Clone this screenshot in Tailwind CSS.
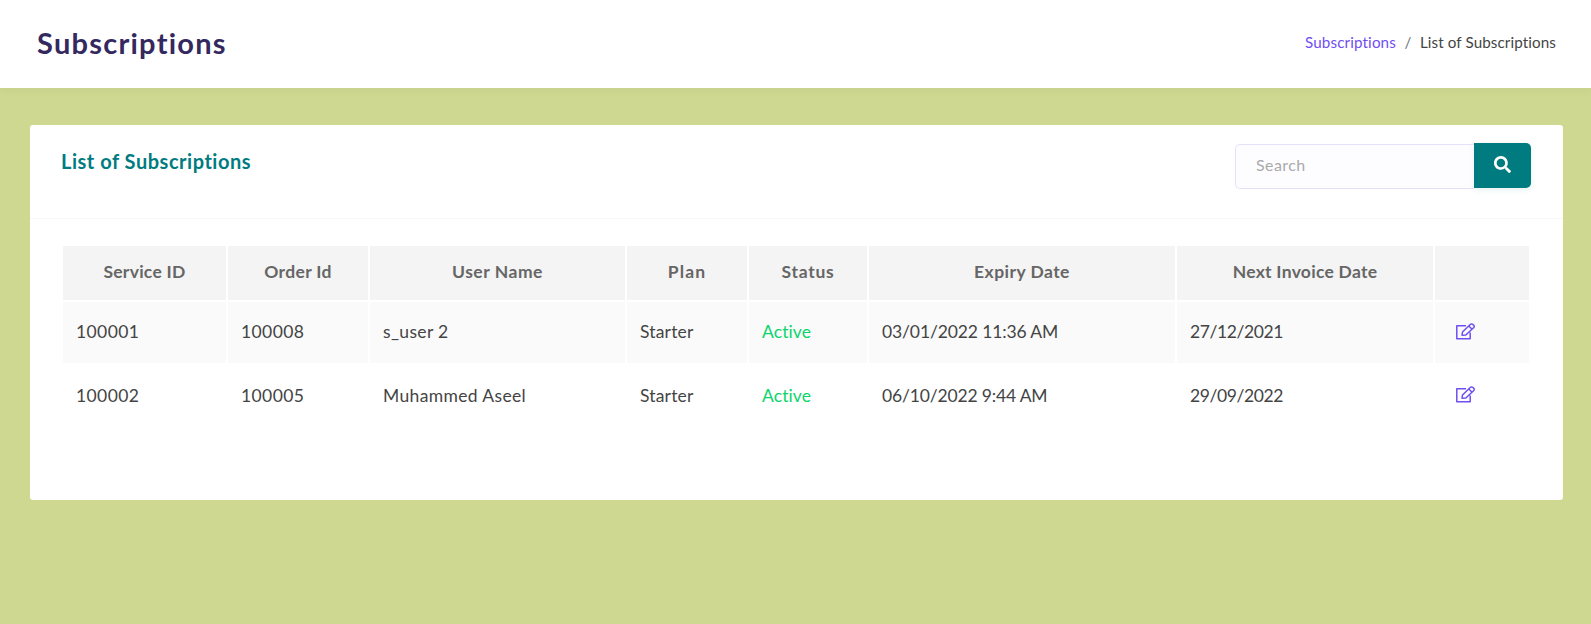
<!DOCTYPE html>
<html lang="en">
<head>
<meta charset="utf-8">
<title>Subscriptions</title>
<script src="https://cdn.jsdelivr.net/npm/@tailwindcss/browser@4"></script>
</head>
<body class="min-h-screen bg-[#ced890] font-['Lato',sans-serif] text-[#444]">
<svg class="hidden">
  <symbol id="edit" viewBox="0 0 19 17"><path d="M10 2.700H.8V15.700H14.200V9.500M6 12.300l.5-3.300 7.700-7.500a1.900 1.900 0 0 1 2.800 0l.6.600a1.900 1.900 0 0 1 0 2.600L9.800 12l-3.800.3zM12.800 3l3.300 3.300" fill="none" stroke="#6f4ef2" stroke-width="1.500" stroke-linejoin="round"/></symbol>
</svg>

<header class="flex h-22 items-center justify-between bg-white pl-[37px] pr-[35px] shadow-[0_4px_8px_rgba(0,0,0,0.03)]">
  <h1 class="-mt-0.5 text-[29px] leading-9 font-bold tracking-[1.25px] text-[#34295f]">Subscriptions</h1>
  <nav class="-mt-1 flex text-[15.2px] leading-6">
    <a class="tracking-[0.13px] text-[#6f4ef2]">Subscriptions</a>
    <span class="w-[24px] text-center text-[#6c757d]">/</span>
    <span class="tracking-[0.1px]">List of Subscriptions</span>
  </nav>
</header>

<main class="pt-[37px] pl-[30px] pr-7">
  <section class="h-[375px] rounded-[3px] bg-white">
    <div class="flex h-[94px] items-start justify-between border-b border-[#f7f7f9] pl-[31px] pr-8 pt-[18px]">
      <h2 class="mt-1 text-[20px] leading-7 font-bold tracking-[0.52px] text-[#007b7f]">List of Subscriptions</h2>
      <form class="flex items-start">
        <div class="mt-px flex h-[45px] w-[239px] items-center rounded-l-[5px] border border-r-0 border-[#e4e2fb] bg-[#fdfdff] pb-[3px] pl-5 text-base tracking-[0.4px] text-[#aaa]">Search</div>
        <button type="button" class="flex h-[45px] w-[57px] items-center justify-center rounded-r-[5px] bg-[#007b7f] pb-[3px] text-white shadow-[0_2px_6px_rgba(0,123,127,0.1)]">
          <svg class="size-[17px]" viewBox="0 0 512 512" fill="currentColor"><path d="M505 442.700L405.300 343c-4.500-4.500-10.600-7-17-7H372c27.600-35.300 44-79.700 44-128C416 93.100 322.900 0 208 0S0 93.100 0 208s93.100 208 208 208c48.300 0 92.700-16.400 128-44v16.300c0 6.400 2.500 12.500 7 17l99.700 99.700c9.400 9.400 24.600 9.400 33.900 0l28.300-28.300c9.400-9.400 9.400-24.600.1-34zM208 336c-70.700 0-128-57.200-128-128 0-70.700 57.200-128 128-128 70.700 0 128 57.200 128 128 0 70.700-57.200 128-128 128z"/></svg>
        </button>
      </form>
    </div>

    <div class="flex flex-col gap-0.5 pt-[27px] pl-[33px] text-[17.5px] leading-6">
      <div class="grid h-[54px] grid-cols-[163px_140px_255px_120px_118px_306px_256px_94px] gap-0.5 text-center font-bold text-[#666] *:bg-[#f4f4f4] *:pt-3.5">
        <div class="tracking-[0.26px]">Service ID</div>
        <div class="tracking-[0.32px]">Order Id</div>
        <div class="tracking-[0.53px]">User Name</div>
        <div class="tracking-[1.1px]">Plan</div>
        <div class="tracking-[0.73px]">Status</div>
        <div class="tracking-[0.46px]">Expiry Date</div>
        <div class="tracking-[0.27px]">Next Invoice Date</div>
        <div></div>
      </div>
      <div class="grid h-[61px] grid-cols-[163px_140px_255px_120px_118px_306px_256px_94px] gap-0.5 *:bg-[#fafafa] *:pt-[18px] *:pl-[13px]">
        <div class="tracking-[0.4px]">100001</div>
        <div class="tracking-[0.4px]">100008</div>
        <div class="tracking-[0.35px]">s_user 2</div>
        <div class="tracking-[0.18px]">Starter</div>
        <div class="tracking-[0.09px] text-[#0bd46b]">Active</div>
        <div class="tracking-[-0.12px]">03/01/2022 11:36 AM</div>
        <div class="tracking-[-0.4px]">27/12/2021</div>
        <div><svg class="mt-[3px] ml-2 h-[17px] w-[19px]"><use href="#edit"/></svg></div>
      </div>
      <div class="grid h-[61px] grid-cols-[163px_140px_255px_120px_118px_306px_256px_94px] gap-0.5 *:pt-[19px] *:pl-[13px]">
        <div class="tracking-[0.4px]">100002</div>
        <div class="tracking-[0.4px]">100005</div>
        <div class="tracking-[0.36px]">Muhammed Aseel</div>
        <div class="tracking-[0.18px]">Starter</div>
        <div class="tracking-[0.09px] text-[#0bd46b]">Active</div>
        <div class="tracking-[-0.16px]">06/10/2022 9:44 AM</div>
        <div class="tracking-[-0.4px]">29/09/2022</div>
        <div><svg class="mt-0.5 ml-2 h-[17px] w-[19px]"><use href="#edit"/></svg></div>
      </div>
    </div>
  </section>
</main>
</body>
</html>
